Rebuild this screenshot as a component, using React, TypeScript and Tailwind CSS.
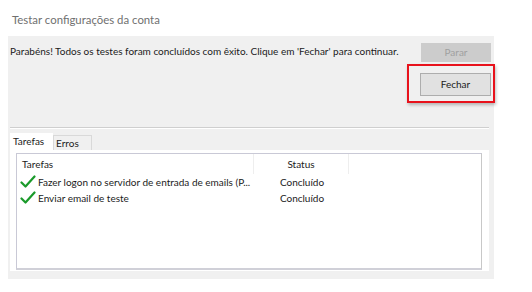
import React from 'react';

const rows = [
  { task: 'Fazer logon no servidor de entrada de emails (P...', status: 'Concluído' },
  { task: 'Enviar email de teste', status: 'Concluído' },
];

const Check: React.FC = () => (
  <svg width="16" height="14" viewBox="0 0 16 14" className="shrink-0">
    <path d="M1.5 7.5 L5.5 11.5 L14.5 1.5" fill="none" stroke="#1a9a2a" strokeWidth="2.2" strokeLinecap="round" strokeLinejoin="round" />
  </svg>
);

const App: React.FC = () => {
  return (
    <div className="w-[532px] h-[292px] bg-white text-[10px] text-[#1b1b1b]" style={{ fontFamily: 'Lato, "Noto Sans", sans-serif' }}>
      <div className="h-[36px] pl-[12px] pt-[12px] text-[11.4px] leading-[16px] text-[#707070]">Testar configurações da conta</div>
      <div className="ml-[8px] w-[486px] h-[243px] bg-[#f0f0f0] flex flex-col">
        <div className="flex pl-[2px] pr-[3px] pt-[7px]">
          <p className="flex-1 min-w-0 leading-[16px] whitespace-nowrap">Parabéns! Todos os testes foram concluídos com êxito. Clique em 'Fechar' para continuar.</p>
          <div className="flex flex-col items-end shrink-0">
            <button className="w-[70px] h-[19px] bg-[#cccccc] text-[#a0a0a0] leading-[19px]">Parar</button>
            <div className="mt-[2px] -mr-[4px] w-[88px] h-[39px] border-2 border-[#e8121c] pl-[11px] pt-[7px] shadow-[1px_2px_3px_rgba(0,0,0,0.25)]">
              <button className="w-[71px] h-[23px] bg-[#e1e1e1] border border-[#adadad] leading-[21px]">Fechar</button>
            </div>
          </div>
        </div>
        <div className="mt-[24px] ml-[2px] w-[479px] h-[2px] border-t border-[#cfcfcf] border-b border-b-white"></div>
        <div className="ml-[2px] mt-[4px] flex items-end h-[17px]">
          <div className="w-[43px] h-[17px] bg-white pl-[3px] leading-[17px]">Tarefas</div>
          <div className="w-[39px] h-[15px] border border-b-0 border-[#d9d9d9] pl-[2px] leading-[14px]">Erros</div>
        </div>
        <div className="ml-[2px] w-[479px] h-[121px] bg-white pl-[6px] pt-[3px]">
          <div className="w-[466px] h-[117px] border border-[#c9c9d6] border-b-2 border-b-[#d0d0d8] border-r-[#c8c8c8]">
            <div className="flex h-[20px] leading-[20px] text-[#1b1b1b]">
              <div className="w-[237px] pl-[5px] border-r border-[#eeeeee]">Tarefas</div>
              <div className="w-[95px] text-center border-r border-[#eeeeee]">Status</div>
            </div>
            {rows.map(row => (
              <div key={row.task} className="flex h-[16px] items-center leading-[16px]">
                <div className="w-[237px] pl-[3px] flex items-center gap-[2px]">
                  <Check />
                  <span className="whitespace-nowrap">{row.task}</span>
                </div>
                <div className="w-[96px] text-center">{row.status}</div>
              </div>
            ))}
          </div>
        </div>
      </div>
    </div>
  );
};

export default App;
